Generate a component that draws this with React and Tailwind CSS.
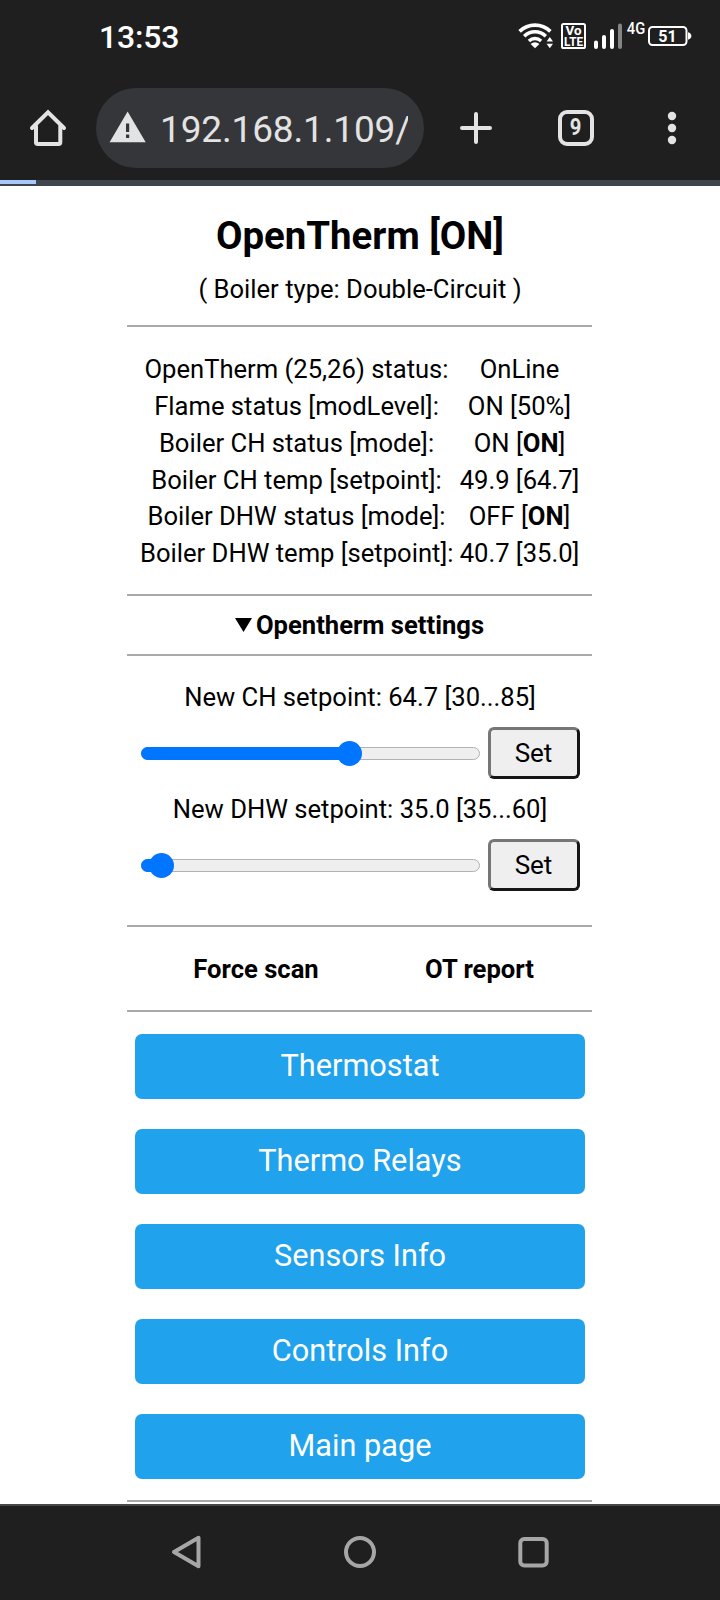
const statusRows = [
  { label: 'OpenTherm (25,26) status:', value: 'OnLine' },
  { label: 'Flame status [modLevel]:', value: 'ON [50%]' },
  { label: 'Boiler CH status [mode]:', value: <>ON [<b>ON</b>]</> },
  { label: 'Boiler CH temp [setpoint]:', value: '49.9 [64.7]' },
  { label: 'Boiler DHW status [mode]:', value: <>OFF [<b>ON</b>]</> },
  { label: 'Boiler DHW temp [setpoint]:', value: '40.7 [35.0]' },
];

const links = ['Thermostat', 'Thermo Relays', 'Sensors Info', 'Controls Info', 'Main page'];

function StatusBar() {
  return (
    <div className="flex h-[72px] items-center justify-between pl-[99px] pr-[27px]">
      <span className="mt-[1px] text-[32px] leading-[36px] font-medium tracking-[-0.2px] text-white">13:53</span>
      <svg className="h-[32px] w-[176px]" viewBox="517 20 176 32" fill="none" stroke="#fff">
        <path d="M519.6 31.4a22 22 0 0 1 30.8 0" strokeWidth="3.6" />
        <path d="M524.2 36.2a15.4 15.4 0 0 1 21.6 0" strokeWidth="3.6" />
        <path d="M528.9 40.9a9 9 0 0 1 12.2 0" strokeWidth="3.4" />
        <path d="M530.6 44a6.5 6.5 0 0 1 8.8 0L535 48.2z" fill="#fff" stroke="none" />
        <path d="M546.6 41.5l3.2-4.5 3.2 4.5zM546.6 43.8l3.2 4.5 3.2-4.5z" fill="#fff" stroke="none" />
        <rect x="562" y="24" width="23" height="24" rx="1.6" strokeWidth="2" />
        <text x="573.6" y="35.2" textAnchor="middle" fontSize="12" fontWeight="700" fill="#fff" stroke="none" textLength="16" lengthAdjust="spacingAndGlyphs">Vo</text>
        <text x="573.6" y="45.8" textAnchor="middle" fontSize="12.5" fontWeight="700" fill="#fff" stroke="none" textLength="19" lengthAdjust="spacingAndGlyphs">LTE</text>
        <path d="M596 42.5V47M604 37V47M612 31V47" strokeWidth="4" strokeLinecap="round" />
        <path d="M620 25.5V47" strokeWidth="4" strokeLinecap="round" stroke="#858585" />
        <text x="626.8" y="33.6" fontSize="16" fontWeight="500" fill="#fff" stroke="none" textLength="18.4" lengthAdjust="spacingAndGlyphs">4G</text>
        <rect x="649" y="27" width="37.5" height="18" rx="3.5" strokeWidth="2" />
        <path d="M688 32.3q3.4 1 3.4 3.7t-3.4 3.7z" fill="#fff" stroke="none" />
        <text x="667.4" y="41.6" textAnchor="middle" fontSize="16" fontWeight="700" fill="#fff" stroke="none">51</text>
      </svg>
    </div>
  );
}

function BrowserBar() {
  return (
    <div className="flex h-[108px] items-start pt-[16px] pl-[28px]">
      <svg className="mt-[20px] h-[40px] w-[40px]" viewBox="28 108 40 40" fill="none" stroke="#e3e3e3" strokeWidth="4" strokeLinecap="round" strokeLinejoin="round">
        <path d="M36 126v16.2q0 1.8 1.8 1.8h20.7q1.8 0 1.8-1.8V126" />
        <path d="M32 128l16-15.6L64 128" strokeLinejoin="miter" />
      </svg>
      <div className="ml-[28px] flex h-[80px] w-[328px] items-center rounded-full bg-[#353639] pr-[16px] pl-[13px]">
        <svg className="mb-[3px] h-[32px] w-[37px] shrink-0" viewBox="109 110 37 32">
          <path d="M127.6 110.4L145.7 141.3H109.6z" fill="#e3e3e3" />
          <path d="M126 122.6h3.2v8.4H126zM126 133.4h3.2v3.6H126z" fill="#353639" />
        </svg>
        <div className="mt-[4px] ml-[14px] flex-1 overflow-hidden text-[37px] leading-[44px] tracking-[-0.15px] whitespace-nowrap text-[#e3e3e3]">192.168.1.109/</div>
      </div>
      <svg className="mt-[22px] ml-[34px] h-[36px] w-[36px]" viewBox="458 110 36 36" stroke="#e3e3e3" strokeWidth="4" strokeLinecap="round">
        <path d="M462 128h28M476 114v28" />
      </svg>
      <div className="mt-[22px] ml-[64px] flex h-[36px] w-[36px] items-center justify-center rounded-[9px] border-4 border-[#e3e3e3] text-[23px] leading-[28px] font-bold text-[#e3e3e3]">
        <span className="scale-x-[0.88]">9</span>
      </div>
      <svg className="mt-[22px] ml-[72px] h-[36px] w-[12px]" viewBox="0 0 12 36" fill="#e3e3e3">
        <circle cx="6" cy="6" r="4.2" />
        <circle cx="6" cy="18" r="4.2" />
        <circle cx="6" cy="30" r="4.2" />
      </svg>
    </div>
  );
}

function Rule() {
  return <div className="mr-px h-[2px] w-[465px] shrink-0 bg-[#a9a9a9]" />;
}

function Setpoint({ label, fill, thumb }) {
  return (
    <div className="flex h-[112px] flex-col items-center">
      <div className="leading-[36px]">{label}</div>
      <div className="mt-[12px] flex w-[439px] items-center justify-between">
        <div className="relative mt-px h-[13px] w-[339px] rounded-full border border-[#b2b2b2] bg-[#efefef]">
          <div className="absolute -top-px -left-px h-[13px] rounded-l-full bg-[#0075ff]" style={{ width: fill }} />
          <div className="absolute -top-[7px] h-[25px] w-[25px] rounded-full bg-[#0075ff]" style={{ left: thumb }} />
        </div>
        <button className="h-[52px] w-[92px] rounded-[6px] border-3 border-t-[#767676] border-r-[#161616] border-b-[#161616] border-l-[#767676] bg-[#efefef] pt-px text-[26px]">Set</button>
      </div>
    </div>
  );
}

export default function App() {
  return (
    <div className="flex h-[1600px] w-[720px] flex-col overflow-hidden bg-white font-['Roboto',sans-serif] text-[25.6px] text-black">
      <header className="h-[186px] shrink-0 bg-[#1f1f1f]">
        <StatusBar />
        <BrowserBar />
        <div className="h-[6px] bg-[#3f454d]">
          <div className="h-[4px] w-[36px] bg-[#a8c7fa]" />
        </div>
      </header>

      <main className="flex h-[1318px] shrink-0 flex-col items-center overflow-hidden">
        <h1 className="mt-[26px] text-[38.4px] leading-[48px] font-bold">OpenTherm [ON]</h1>
        <p className="mt-[11px] leading-[36px]">( Boiler type: Double-Circuit )</p>
        <div className="h-[18px] shrink-0" />
        <Rule />
        <div className="mt-[24.2px] flex w-[440px] shrink-0 flex-col">
          {statusRows.map((row) => (
            <div key={row.label} className="flex justify-between leading-[36.8px] whitespace-nowrap">
              <div className="w-[313px] text-center">{row.label}</div>
              <div className="w-[121px] text-center">{row.value}</div>
            </div>
          ))}
        </div>
        <div className="h-[22px] shrink-0" />
        <Rule />
        <div className="mt-[11px] mb-[10px] flex items-center gap-[4px] pr-px leading-[37px] font-bold">
          <svg className="h-[14px] w-[17px]" viewBox="0 0 17 14">
            <path d="M0 0h17L8.5 14z" />
          </svg>
          Opentherm settings
        </div>
        <Rule />
        <div className="mt-[23px] flex shrink-0 flex-col">
          <Setpoint label="New CH setpoint: 64.7 [30...85]" fill="209px" thumb="195px" />
          <Setpoint label="New DHW setpoint: 35.0 [35...60]" fill="20px" thumb="7px" />
        </div>
        <div className="h-[22px] shrink-0" />
        <Rule />
        <div className="flex h-[83px] w-[449px] shrink-0 items-center pt-[2px] font-bold">
          <div className="w-[241px] text-center">Force scan</div>
          <div className="w-[206px] text-center">OT report</div>
        </div>
        <Rule />
        <nav className="mt-[22px] flex shrink-0 flex-col gap-[30px]">
          {links.map((link) => (
            <button key={link} className="h-[65px] w-[450px] rounded-[7px] bg-[#20a2ed] text-[30.7px] text-white">{link}</button>
          ))}
        </nav>
        <div className="h-[21px] shrink-0" />
        <Rule />
      </main>

      <footer className="flex h-[96px] shrink-0 items-center justify-between border-t-2 border-[#474747] bg-[#1f1f1f] pr-[169px] pb-[2px] pl-[170px]">
        <svg className="h-[36px] w-[32px]" viewBox="170 1534 32 36" fill="none" stroke="#a6a6a6" strokeWidth="4" strokeLinejoin="round">
          <path d="M198.5 1537.8v28.4L174 1552z" />
        </svg>
        <svg className="ml-[2px] h-[36px] w-[36px]" viewBox="0 0 36 36" fill="none" stroke="#a6a6a6" strokeWidth="4">
          <circle cx="18" cy="18" r="14" />
        </svg>
        <svg className="h-[36px] w-[35px]" viewBox="516 1534 35 36" fill="none" stroke="#a6a6a6" strokeWidth="4">
          <rect x="520.3" y="1539" width="26.4" height="26.4" rx="4" />
        </svg>
      </footer>
    </div>
  );
}
